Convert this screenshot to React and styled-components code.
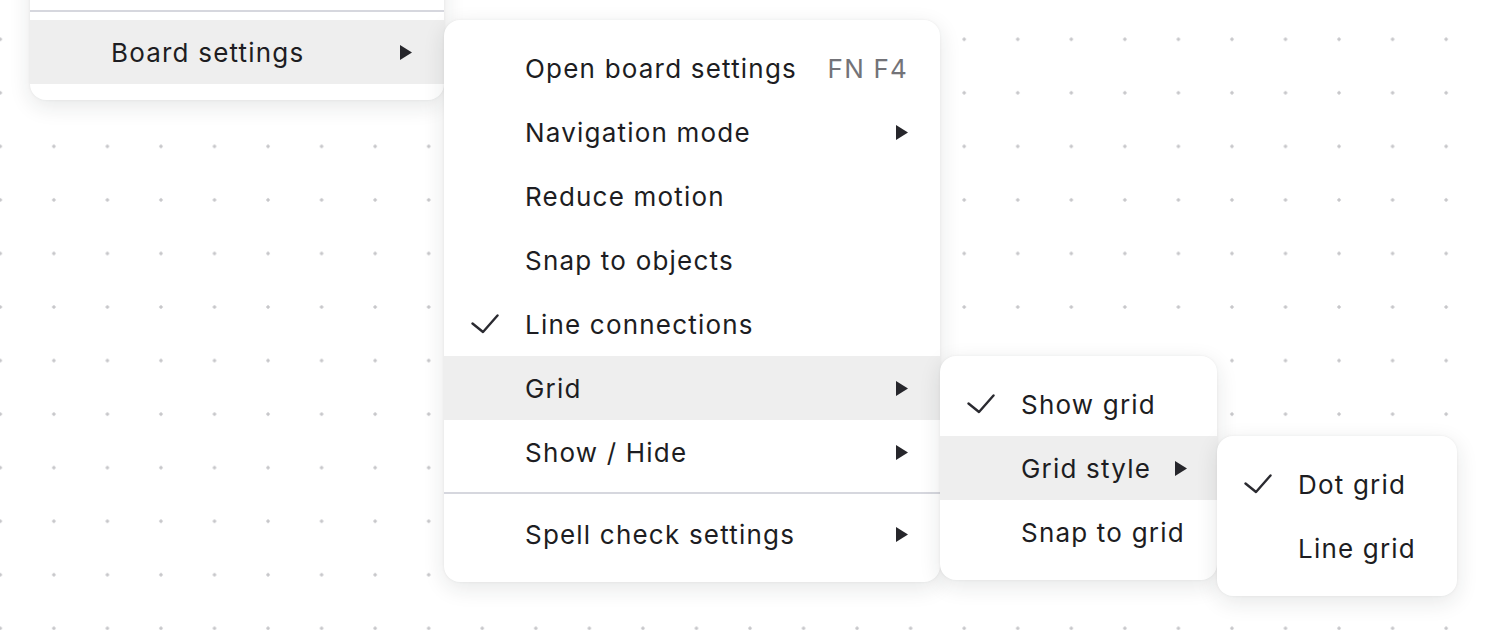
import React from 'react';
import styled, { createGlobalStyle } from 'styled-components';

const GlobalStyle = createGlobalStyle`
	html, body {
		margin: 0;
		padding: 0;
		background: #ffffff;
	}
	body {
		font-family: Inter, "Noto Sans", "Liberation Sans", sans-serif;
		color: #1d1d22;
		-webkit-font-smoothing: antialiased;
	}
`;

const Board = styled.div`
	position: relative;
	width: 1494px;
	height: 630px;
	overflow: hidden;
	background: #ffffff;
`;

const GridLayer = styled.svg`
	position: absolute;
	inset: 0;
	width: 100%;
	height: 100%;
`;

const Menu = styled.div`
	position: absolute;
	left: ${p => p.$left}px;
	top: ${p => p.$top}px;
	width: ${p => p.$width}px;
	z-index: ${p => p.$layer};
	box-sizing: border-box;
	padding: 16px 0;
	background: #ffffff;
	border-radius: 16px;
	box-shadow: 0 6px 22px rgba(30, 32, 38, 0.11), 0 0 3px rgba(30, 32, 38, 0.06);
	display: flex;
	flex-direction: column;
`;

const Row = styled.div`
	height: 64px;
	display: flex;
	align-items: center;
	padding-right: 32px;
	background: ${p => (p.$active ? '#eeeeee' : 'transparent')};
	font-size: 26px;
	letter-spacing: 1.2px;
	white-space: nowrap;
`;

const CheckSlot = styled.span`
	width: 81px;
	flex: none;
	display: flex;
	justify-content: center;
`;

const Label = styled.span`
	flex: 1;
`;

const Shortcut = styled.span`
	color: #737378;
	margin-left: 24px;
`;

const Divider = styled.div`
	height: 2px;
	margin: 8px 0;
	background: #d6d7de;
`;

const ArrowBox = styled.span`
	display: flex;
	margin-left: 24px;
`;

function Check() {
	return (
		<svg width="28" height="20" viewBox="0 0 28 20">
			<path d="M1.5 9.5 L12 18 L26.5 1.5" fill="none" stroke="#2a2a30" strokeWidth="2.4" strokeLinecap="round" strokeLinejoin="round" />
		</svg>
	);
}

function Arrow() {
	return (
		<ArrowBox>
			<svg width="12" height="15" viewBox="0 0 12 15">
				<polygon points="0,0 12,7.5 0,15" fill="#26262b" />
			</svg>
		</ArrowBox>
	);
}

function Item({ label, checked, active, submenu, shortcut }) {
	return (
		<Row $active={active}>
			<CheckSlot>{checked && <Check />}</CheckSlot>
			<Label>{label}</Label>
			{shortcut && <Shortcut>{shortcut}</Shortcut>}
			{submenu && <Arrow />}
		</Row>
	);
}

export default function App() {
	return (
		<>
			<GlobalStyle />
			<Board>
				<GridLayer>
					<defs>
						<pattern id="dots" x="-26.5" y="12.5" width="53.55" height="53.55" patternUnits="userSpaceOnUse">
							<path d="M24.8 26.8 H28.8 M26.8 24.8 V28.8" stroke="#b4b4b8" strokeWidth="1" />
						</pattern>
					</defs>
					<rect width="100%" height="100%" fill="url(#dots)" />
				</GridLayer>

				{/* the top of this menu runs off the page, only its last rows show */}
				<Menu $left={30} $top={-78} $width={414} $layer={1}>
					<Item label="" />
					<Divider />
					<Item label="Board settings" active submenu />
				</Menu>

				<Menu $left={444} $top={20} $width={496} $layer={2}>
					<Item label="Open board settings" shortcut="FN F4" />
					<Item label="Navigation mode" submenu />
					<Item label="Reduce motion" />
					<Item label="Snap to objects" />
					<Item label="Line connections" checked />
					<Item label="Grid" active submenu />
					<Item label="Show / Hide" submenu />
					<Divider />
					<Item label="Spell check settings" submenu />
				</Menu>

				<Menu $left={940} $top={356} $width={277} $layer={3}>
					<Item label="Show grid" checked />
					<Item label="Grid style" active submenu />
					<Item label="Snap to grid" />
				</Menu>

				<Menu $left={1217} $top={436} $width={240} $layer={4}>
					<Item label="Dot grid" checked />
					<Item label="Line grid" />
				</Menu>
			</Board>
		</>
	);
}
